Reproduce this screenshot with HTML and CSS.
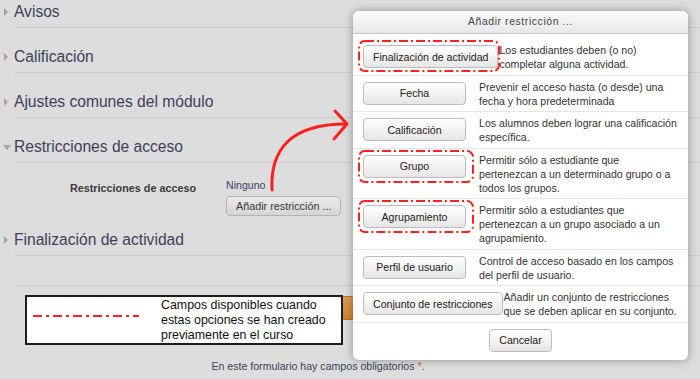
FILE: index.html
```html
<!DOCTYPE html>
<html>
<head>
    <title>Añadir restricción</title>
    <link rel="stylesheet" href="styles.css">
</head>
<body>
    <div class="form">
        <div class="section">
            <div class="section-head"><span class="toggle"><i class="tri-right"></i></span><h3>Avisos</h3></div>
        </div>
        <div class="section">
            <div class="section-head"><span class="toggle"><i class="tri-right"></i></span><h3>Calificación</h3></div>
        </div>
        <div class="section">
            <div class="section-head"><span class="toggle"><i class="tri-right"></i></span><h3>Ajustes comunes del módulo</h3></div>
        </div>
        <div class="section open">
            <div class="section-head"><span class="toggle"><i class="tri-down"></i></span><h3>Restricciones de acceso</h3></div>
            <div class="fitem">
                <div class="fitem-label">Restricciones de acceso</div>
                <div class="fitem-field">
                    <div class="none">Ninguno</div>
                    <button class="btn-page">Añadir restricción ...</button>
                </div>
            </div>
        </div>
        <div class="section">
            <div class="section-head"><span class="toggle"><i class="tri-right"></i></span><h3>Finalización de actividad</h3></div>
        </div>
        <div class="sep"></div>
        <div class="actions">
            <!-- save button, mostly hidden behind the legend and the dialog -->
            <button class="btn-save" title="Guardar cambios"></button>
        </div>
        <div class="footnote">En este formulario hay campos obligatorios <span class="req">*</span>.</div>
    </div>

    <!-- annotation: arrow pointing at the dialog -->
    <svg class="arrow" width="100" height="100" viewBox="0 0 100 100">
        <path d="M22 90 C 20 50, 40 24, 96 24" fill="none" stroke="#ff1f1f" stroke-width="3" stroke-linecap="round"/>
        <path d="M85 11 L97 24 L84 39" fill="none" stroke="#ff1f1f" stroke-width="3" stroke-linecap="round" stroke-linejoin="round"/>
    </svg>

    <!-- annotation: legend box -->
    <div class="legend">
        <svg class="legend-line" width="106" height="4" viewBox="0 0 106 4">
            <line x1="0" y1="2" x2="106" y2="2" stroke="#ff1f1f" stroke-width="2" stroke-dasharray="9 4 3 4"/>
        </svg>
        <div class="legend-text">Campos disponibles cuando<br>estas opciones se han creado<br>previamente en el curso</div>
    </div>

    <div class="modal">
        <div class="modal-head">Añadir restricción ...</div>
        <div class="modal-body">
            <div class="opt">
                <div class="opt-btn">
                    <button>Finalización de actividad</button>
                    <svg class="mark" width="142" height="32" viewBox="0 0 142 32"><rect x="1" y="1" width="140" height="30" rx="6" fill="none" stroke="#ff2020" stroke-width="2" stroke-dasharray="9 3 2 3"/></svg>
                </div>
                <div class="opt-text">Los estudiantes deben (o no)<br>completar alguna actividad.</div>
            </div>
            <div class="opt">
                <div class="opt-btn"><button>Fecha</button></div>
                <div class="opt-text">Prevenir el acceso hasta (o desde) una<br>fecha y hora predeterminada</div>
            </div>
            <div class="opt">
                <div class="opt-btn"><button>Calificación</button></div>
                <div class="opt-text">Los alumnos deben lograr una calificación<br>específica.</div>
            </div>
            <div class="opt">
                <div class="opt-btn">
                    <button>Grupo</button>
                    <svg class="mark" width="116" height="33" viewBox="0 0 116 33"><rect x="1" y="1" width="114" height="31" rx="6" fill="none" stroke="#ff2020" stroke-width="2" stroke-dasharray="9 3 2 3"/></svg>
                </div>
                <div class="opt-text">Permitir sólo a estudiante que<br>pertenezcan a un determinado grupo o a<br>todos los grupos.</div>
            </div>
            <div class="opt">
                <div class="opt-btn">
                    <button>Agrupamiento</button>
                    <svg class="mark" width="116" height="33" viewBox="0 0 116 33"><rect x="1" y="1" width="114" height="31" rx="6" fill="none" stroke="#ff2020" stroke-width="2" stroke-dasharray="9 3 2 3"/></svg>
                </div>
                <div class="opt-text">Permitir sólo a estudiantes que<br>pertenezcan a un grupo asociado a un<br>agrupamiento.</div>
            </div>
            <div class="opt">
                <div class="opt-btn"><button>Perfil de usuario</button></div>
                <div class="opt-text">Control de acceso basado en los campos<br>del perfil de usuario.</div>
            </div>
            <div class="opt">
                <div class="opt-btn"><button>Conjunto de restricciones</button></div>
                <div class="opt-text">Añadir un conjunto de restricciones<br>que se deben aplicar en su conjunto.</div>
            </div>
        </div>
        <div class="modal-foot"><button>Cancelar</button></div>
    </div>
</body>
</html>
```

FILE: styles.css
```css
body {
    margin: 0;
    background-color: #dddddd;
    font-family: "Liberation Sans", Arial, sans-serif;
    color: #3d3d5c;
    overflow: hidden;
}

button {
    font-family: inherit;
}

/* page behind the dialog */

.section {
    margin-bottom: 17px;
}

.section-head {
    display: flex;
    align-items: flex-start;
    padding-left: 4px;
}

.toggle {
    width: 10px;
    height: 24px;
    display: flex;
    align-items: center;
}

.tri-right {
    width: 0;
    height: 0;
    border-left: 4px solid #a3a3a3;
    border-top: 4px solid transparent;
    border-bottom: 4px solid transparent;
}

.tri-down {
    width: 0;
    height: 0;
    margin-left: -1px;
    border-top: 5px solid #a3a3a3;
    border-left: 4px solid transparent;
    border-right: 4px solid transparent;
}

.section-head h3 {
    flex: 1;
    margin: 0;
    padding-bottom: 3px;
    font-size: 15.6px;
    font-weight: normal;
    line-height: 24px;
    border-bottom: 1px solid #cbcbcb;
}

.section.open {
    margin-bottom: 12px;
}

.fitem {
    display: flex;
    margin-top: 15px;
    padding-left: 12px;
}

.fitem-label {
    width: 184px;
    padding-top: 3px;
    text-align: right;
    font-size: 10.8px;
    font-weight: bold;
    line-height: 14px;
    color: #3a3a3a;
}

.fitem-field {
    margin-left: 30px;
}

.none {
    font-size: 10.6px;
    line-height: 14px;
}

.btn-page {
    display: block;
    height: 20px;
    margin-top: 4px;
    padding: 0 9px;
    font-size: 10.8px;
    color: #3a3a3a;
    background: linear-gradient(#ebebeb, #d5d5d5);
    border: 1px solid #b3b3b3;
    border-radius: 4px;
}

.sep {
    height: 12px;
    margin-left: 14px;
    border-bottom: 1px solid #cbcbcb;
}

.actions {
    margin-top: 10px;
    padding-left: 226px;
}

.btn-save {
    display: block;
    width: 180px;
    height: 24px;
    background: linear-gradient(#e39a50, #cf8232);
    border: 1px solid #b87430;
    border-radius: 4px;
}

.footnote {
    width: 636px;
    margin-top: 39px;
    text-align: center;
    font-size: 10.6px;
    line-height: 14px;
}

.req {
    color: #d06060;
}

/* annotations */

.arrow {
    position: absolute;
    left: 250px;
    top: 100px;
}

.legend {
    position: absolute;
    left: 25px;
    top: 295px;
    width: 314px;
    height: 46px;
    display: flex;
    align-items: center;
    background-color: #ffffff;
    border: 2px solid #1e1e1e;
}

.legend-line {
    margin-left: 6px;
    margin-top: -8px;
}

.legend-text {
    margin-left: 22px;
    font-size: 12.4px;
    line-height: 15px;
    color: #111111;
}

/* dialog */

.modal {
    position: absolute;
    left: 353px;
    top: 11px;
    width: 335px;
    background-color: #ffffff;
    border-radius: 6px;
    box-shadow: 0 0 10px rgba(0, 0, 0, 0.35);
    color: #333333;
}

.modal-head {
    height: 22px;
    line-height: 22px;
    text-align: center;
    font-size: 10.4px;
    letter-spacing: 0.6px;
    color: #444444;
    background: linear-gradient(#fbfbfb, #e8e8e8);
    border-bottom: 1px solid #c8c8c8;
    border-radius: 6px 6px 0 0;
}

.modal-body {
    padding-top: 5px;
}

.opt {
    display: flex;
    align-items: flex-start;
    padding: 4px 8px 3.5px 10px;
    border-bottom: 1px solid #e6e6e6;
}

.opt-btn {
    position: relative;
    min-width: 116px;
    padding-top: 2px;
    padding-right: 1px;
    box-sizing: border-box;
}

.opt-btn button,
.modal-foot button {
    min-width: 103px;
    height: 23px;
    padding: 0 9px;
    font-size: 10.6px;
    color: #222222;
    background: linear-gradient(#ffffff, #e6e6e6);
    border: 1px solid #bcbcbc;
    border-radius: 4px;
}

.mark {
    position: absolute;
    left: -5px;
    top: -3px;
}

.opt-text {
    font-size: 10.6px;
    line-height: 14px;
    white-space: nowrap;
}

.modal-foot {
    padding: 6px 0 8px;
    text-align: center;
}

.modal-foot button {
    min-width: 61px;
    height: 23px;
}
```
